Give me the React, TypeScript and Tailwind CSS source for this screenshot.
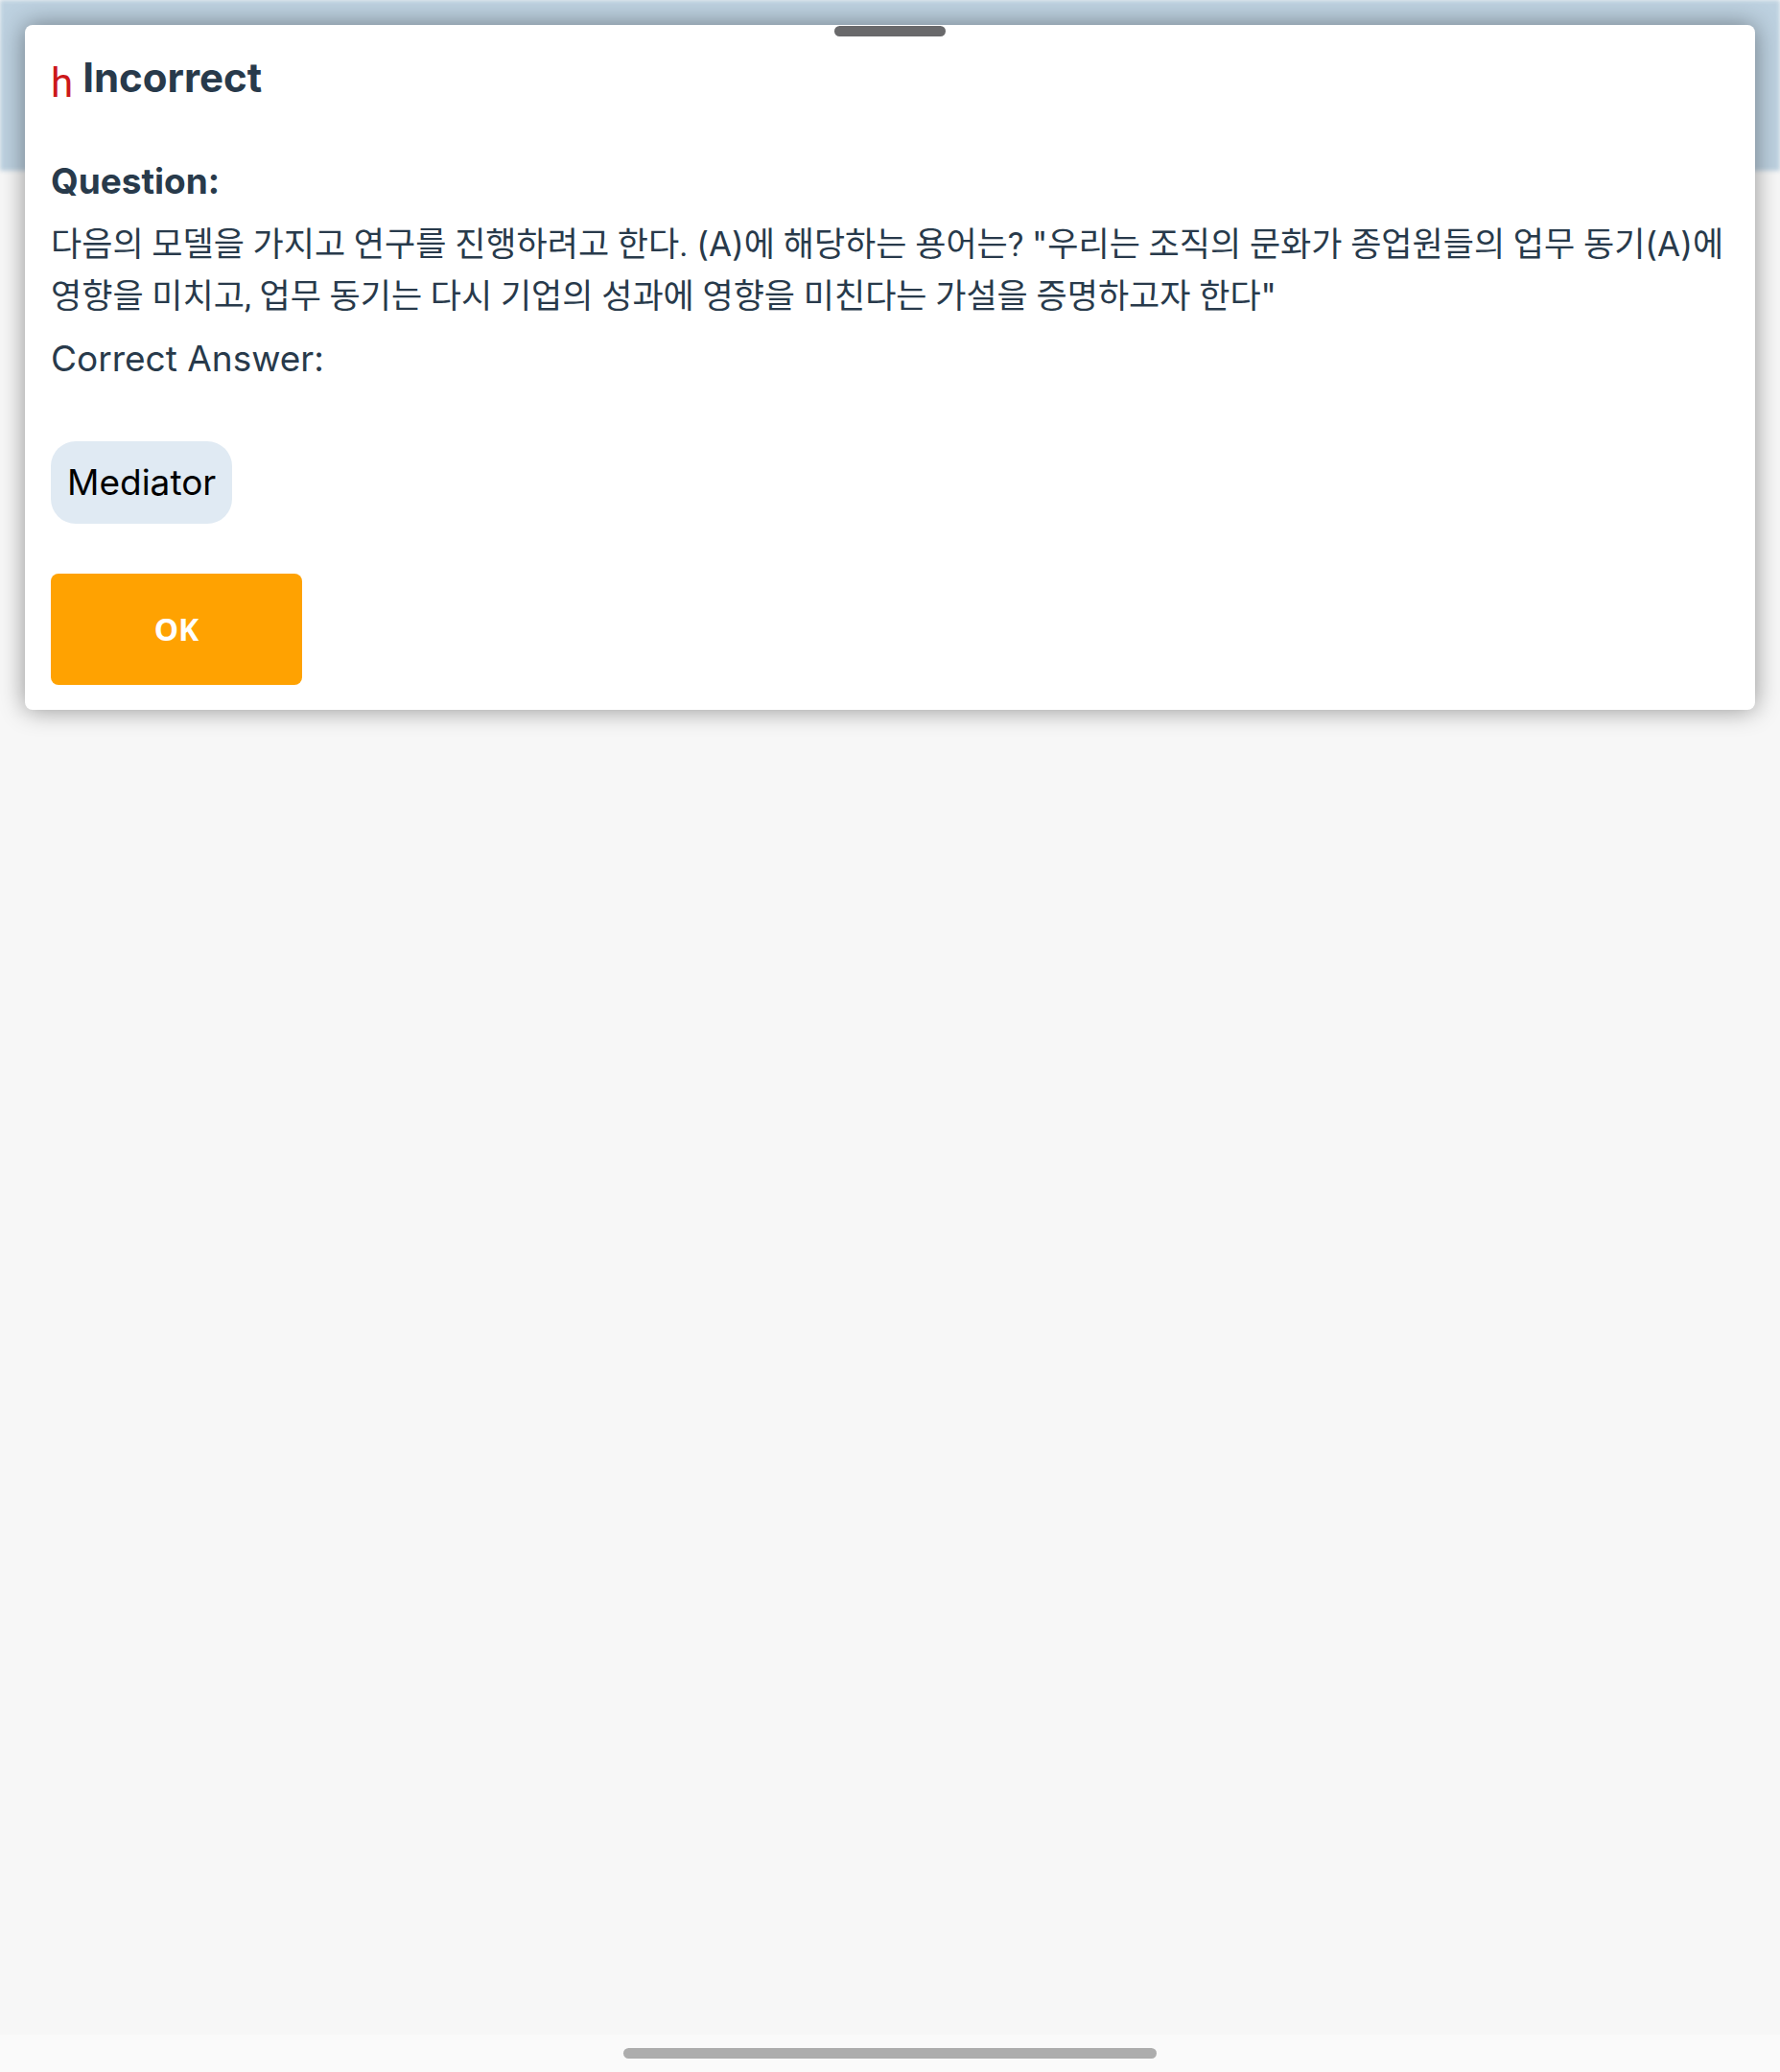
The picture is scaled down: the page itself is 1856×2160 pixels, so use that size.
export default function App() {
  return (
    <div className="relative isolate flex min-h-screen flex-col overflow-hidden bg-[#f7f7f7] font-['Inter','Noto_Sans_CJK_KR',sans-serif] text-[#283a4b]">
      <div className="absolute inset-x-0 top-0 -z-10 h-[178px] bg-[#bdd1e0] blur-[2px]" />
      <main className="grow p-[26px]">
        <section
          role="dialog"
          aria-labelledby="result-title"
          className="relative rounded-lg bg-white px-[27px] pb-[26px] pt-[29px] shadow-[0_0_26px_rgba(0,0,0,0.42)]"
        >
          <div className="absolute left-1/2 top-px h-[11px] w-[116px] -translate-x-1/2 rounded-md bg-[#69696b]" />
          <h1 id="result-title" className="flex items-start gap-2.5 text-[42px] font-bold leading-[52px]">
            <span className="pt-1.5 font-['Roboto'] font-normal text-[#cc1719]">h</span>
            Incorrect
          </h1>
          <h2 className="mt-[50px] text-[37px] font-bold leading-[52px]">Question:</h2>
          <p className="mt-[13px] font-['Roboto','Noto_Sans_CJK_KR',sans-serif] text-[35px] leading-[53px]">
            다음의 모델을 가지고 연구를 진행하려고 한다. <span className="font-['Inter']">(A)</span>에 해당하는 용어는?{" "}
            <span className="font-['Inter']">"</span>우리는 조직의 문화가 종업원들의 업무 동기
            <span className="font-['Inter']">(A)</span>에 영향을 미치고, 업무 동기는 다시 기업의 성과에 영향을 미친다는 가설을 증명하고자 한다
            <span className="font-['Inter']">"</span>
          </p>
          <p className="mt-3 text-[37px] leading-[52px]">Correct Answer:</p>
          <div className="mt-[60px] w-fit rounded-[26px] bg-[#e0eaf3] px-[17px] py-[17px] text-[37px] leading-[52px] text-black">
            Mediator
          </div>
          <button
            type="button"
            className="mt-[52px] block h-[116px] w-[262px] rounded-lg bg-[#ffa201] font-['Noto_Sans'] text-[32px] font-bold text-white"
          >
            OK
          </button>
        </section>
      </main>
      <footer className="flex h-[39px] items-center justify-center bg-[#fafafa]">
        <div className="h-[11px] w-[30%] rounded-lg bg-[#adadad]" />
      </footer>
    </div>
  );
}
